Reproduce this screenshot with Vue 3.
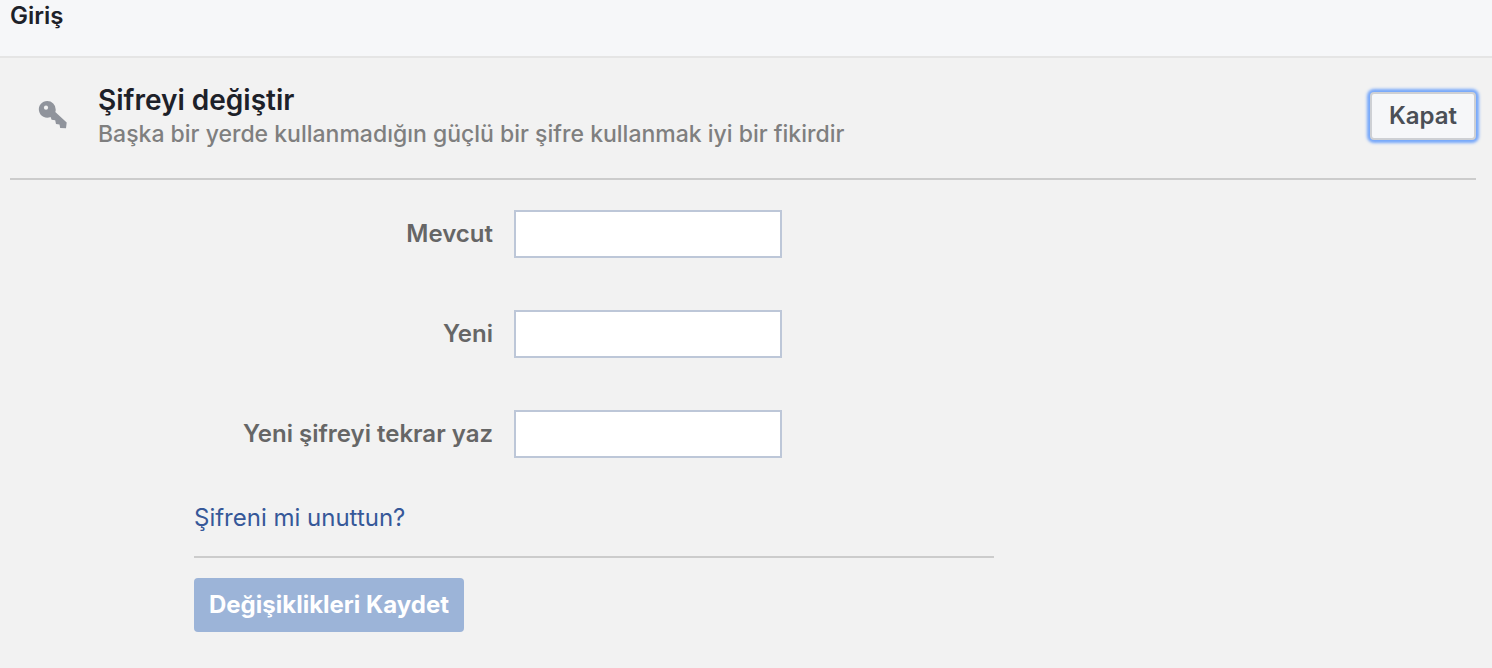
<script setup>
const fields = [
  { id: 'current', label: 'Mevcut' },
  { id: 'new', label: 'Yeni' },
  { id: 'repeat', label: 'Yeni şifreyi tekrar yaz' },
]
</script>

<template>
  <main class="page">
    <header class="bar"><h1>Giriş</h1></header>
    <section class="panel">
      <div class="head">
        <svg class="key" viewBox="0 0 32 32" aria-hidden="true">
          <path fill="#90949c" d="M11.300 2a8.400 8.400 0 0 1 8.400 8.400c0 1-.1 1.900-.4 2.700L30.700 23.600 30 29.200 24.200 28.900 23.500 25.400 20 25 19.200 21.300 15.600 20.800 14.600 18.100A8.400 8.400 0 1 1 11.300 2Z" />
          <circle cx="10" cy="8.700" r="2.100" fill="#f2f2f2" />
        </svg>
        <div class="titles">
          <h2>Şifreyi değiştir</h2>
          <p>Başka bir yerde kullanmadığın güçlü bir şifre kullanmak iyi bir fikirdir</p>
        </div>
        <button type="button" class="close">Kapat</button>
      </div>
      <form class="form" @submit.prevent>
        <div v-for="f in fields" :key="f.id" class="row">
          <label :for="f.id">{{ f.label }}</label>
          <input :id="f.id" type="password" />
        </div>
        <div class="forgot"><a href="#">Şifreni mi unuttun?</a></div>
        <button type="submit" class="save">Değişiklikleri Kaydet</button>
      </form>
    </section>
  </main>
</template>

<style>
body { background: #f2f2f2; }
</style>

<style scoped>
* { box-sizing: border-box; }
.page { font-family: Inter, "Noto Sans", sans-serif; font-size: 24px; line-height: 32px; color: #1d2129; }
h1, h2, p { margin: 0; }
.bar { height: 58px; padding: 0 10px; background: #f6f7f9; border-bottom: 2px solid #e5e5e5; }
h1 { font-size: 24px; font-weight: 600; line-height: 32px; }
.panel { padding: 0 16px 36px 10px; }
.head { display: flex; align-items: flex-start; height: 122px; padding-top: 26px; border-bottom: 2px solid #ccc; }
.key { flex: none; width: 32px; height: 32px; margin: 15px 30px 0 26px; }
.titles { flex: 1; }
h2 { font-size: 28px; font-weight: 600; line-height: 32px; }
p { font-size: 23px; font-weight: 500; color: #7f7f7f; line-height: 36px; }
.close { width: 106px; height: 48px; margin-top: 8px; padding: 0; font: inherit; font-weight: 600; color: #4b4f56; background: #f6f7f9; border: 2px solid #ced0d4; border-radius: 4px; box-shadow: 0 0 3px 3px #76a7fa; }
.form { max-width: 800px; margin: 30px 0 0 184px; }
.row { display: flex; align-items: center; height: 48px; margin-bottom: 52px; }
label { width: 299px; margin-right: 21px; text-align: right; font-weight: 600; color: #666; white-space: nowrap; }
input { width: 268px; height: 48px; padding: 0 8px; font: inherit; background: #fff; border: 2px solid #bdc7d8; border-radius: 0; outline: none; }
.forgot { height: 56px; margin-top: -8px; border-bottom: 2px solid #ccc; }
a { color: #365899; text-decoration: none; }
.save { height: 54px; width: 270px; margin-top: 20px; padding: 0; border: 0; border-radius: 4px; background: #9cb4d8; color: #fff; font: inherit; font-weight: 700; }
</style>
